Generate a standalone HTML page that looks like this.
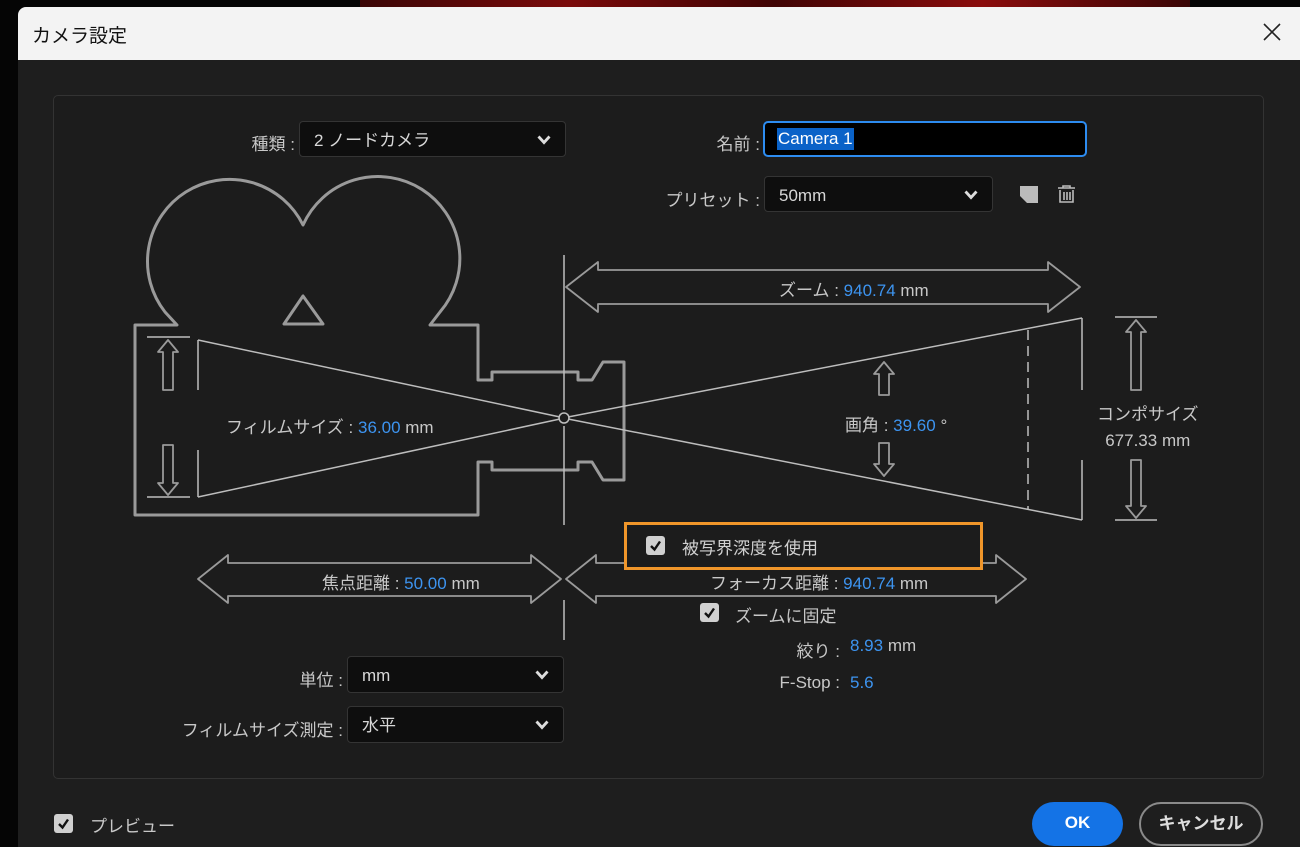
<!DOCTYPE html>
<html><head><meta charset="utf-8"><style>
*{margin:0;padding:0;box-sizing:border-box}
body{width:1300px;height:840px;background:#050505;position:relative;overflow:hidden;font-family:"Liberation Sans","Noto Sans CJK JP",sans-serif;color:#c8c8c8;font-size:17px}
.a{position:absolute;white-space:nowrap}
.b{color:#3d94f0}
.dd{position:absolute;background:#0e0e0e;border:1px solid #343434;border-radius:4px;color:#d8d8d8;padding-left:14px;line-height:37px}
.dd svg{position:absolute;right:14px;top:13px}
.cb{position:absolute;width:19px;height:19px;background:#d0d0d0;border-radius:3px}
.cb svg{position:absolute;left:3px;top:3px}
.r{text-align:right}
</style></head><body>
<div class="a" style="left:360px;top:0;width:830px;height:8px;background:linear-gradient(90deg,#3a0606,#7a0a0a,#400404,#8a0c0c,#3a0606)"></div>
<div class="a" style="left:18px;top:7px;width:1290px;height:840px;background:#1e1e1e;border-radius:8px 8px 0 0;overflow:hidden">
 <div style="height:53px;background:#f3f3f3;color:#111;font-size:19px;padding:14px 0 0 14px">カメラ設定</div>
</div>
<svg class="a" style="left:1262px;top:22px" width="20" height="20"><path d="M2 2L18 18M18 2L2 18" stroke="#222" stroke-width="1.6"/></svg>
<div class="a" style="left:53px;top:95px;width:1211px;height:684px;border:1px solid #333;border-radius:5px;background:#1c1c1c"></div>

<svg class="a" style="left:0;top:0" width="1300" height="840" fill="none" stroke="#9a9a9a">
 <g stroke-width="3" stroke-linejoin="round">
  <path d="M430,325 L440,312 A82 82 0 1 0 303,225 A82 82 0 1 0 165,312 L177,325 H135 V515 H478 V462 H492 V470 H578 V462 H592 L603,480 H624 V362 H603 L592,380 H578 V372 H492 V380 H478 V325 Z"/>
  <path d="M303,296 L284,324 H323 Z"/>
 </g>
 <g stroke="#bdbdbd" stroke-width="1.5">
  <path d="M198,340 L560,417 M198,497 L560,419 M568,417 L1082,318 M568,419 L1082,520"/>
  <path d="M198,340 V390 M198,450 V497 M1082,318 V390 M1082,460 V520"/>
  <path d="M1028,330 V510" stroke-dasharray="10 6"/>
  <path d="M564,255 V410 M564,426 V525 M564,600 V640"/>
  <circle cx="564" cy="418" r="5"/>
  <path d="M147,337 H190 M147,497 H190 M1115,317 H1157 M1115,520 H1157"/>
 </g>
 <g stroke="#9a9a9a" stroke-width="1.8" stroke-linejoin="round">
  <path d="M168,340 L178,352 H173 V390 H163 V352 H158 Z"/>
  <path d="M168,495 L178,483 H173 V445 H163 V483 H158 Z"/>
  <path d="M1136,320 L1146,332 H1141 V390 H1131 V332 H1126 Z"/>
  <path d="M1136,518 L1146,506 H1141 V460 H1131 V506 H1126 Z"/>
  <path d="M884,362 L894,374 H889 V395 H879 V374 H874 Z"/>
  <path d="M884,476 L894,464 H889 V443 H879 V464 H874 Z"/>
  <path d="M566,287 L598,262 V270 H1048 V262 L1080,287 L1048,312 V304 H598 V312 Z"/>
  <path d="M198,579 L228,555 V563 H531 V555 L561,579 L531,603 V596 H228 V603 Z"/>
  <path d="M566,579 L596,555 V563 H996 V555 L1026,579 L996,603 V596 H596 V603 Z"/>
 </g>
</svg>

<div class="a r" style="left:200px;top:130px;width:95px">種類 :</div>
<div class="dd" style="left:299px;top:121px;width:267px;height:36px">2 ノードカメラ<svg width="14" height="10"><path d="M1.5 1.5L7 7.5L12.5 1.5" stroke="#ddd" stroke-width="2.8" fill="none"/></svg></div>
<div class="a r" style="left:660px;top:130px;width:100px">名前 :</div>
<div class="a" style="left:763px;top:121px;width:324px;height:36px;background:#000;border:2px solid #2d8cf0;border-radius:5px"></div>
<div class="a" style="left:777px;top:128px;background:#0a62c8;color:#fff;padding:0 1px;line-height:22px">Camera 1</div>
<div class="a r" style="left:640px;top:186px;width:120px">プリセット :</div>
<div class="dd" style="left:764px;top:176px;width:229px;height:36px">50mm<svg width="14" height="10"><path d="M1.5 1.5L7 7.5L12.5 1.5" stroke="#ddd" stroke-width="2.8" fill="none"/></svg></div>
<svg class="a" style="left:1019px;top:184px" width="60" height="20"><path d="M1,2H19V19H8L1,12Z" fill="#bbb"/><g stroke="#bbb" stroke-width="1.6" fill="none"><path d="M39,4H56M44,4V2H51V4M41,6V18H54V6M45,8V16M48,8V16M51,8V16"/></g></svg>

<div class="a" style="left:779px;top:276px">ズーム : <span class="b">940.74</span> mm</div>
<div class="a" style="left:226px;top:413px">フィルムサイズ : <span class="b">36.00</span> mm</div>
<div class="a" style="left:845px;top:411px">画角 : <span class="b">39.60</span> °</div>
<div class="a" style="left:1097px;top:402px;text-align:center;line-height:26px">コンポサイズ<br>677.33 mm</div>
<div class="a" style="left:322px;top:569px">焦点距離 : <span class="b">50.00</span> mm</div>
<div class="a" style="left:710px;top:569px">フォーカス距離 : <span class="b">940.74</span> mm</div>

<div class="a" style="left:624px;top:522px;width:359px;height:48px;border:3px solid #f0962a;background:#1c1c1c"></div>
<div class="cb" style="left:646px;top:536px"><svg width="13" height="13"><path d="M2 7L5.5 10.5L11 2.5" stroke="#111" stroke-width="2.4" fill="none"/></svg></div>
<div class="a" style="left:682px;top:534px;color:#d0d0d0">被写界深度を使用</div>
<div class="cb" style="left:700px;top:603px"><svg width="13" height="13"><path d="M2 7L5.5 10.5L11 2.5" stroke="#111" stroke-width="2.4" fill="none"/></svg></div>
<div class="a" style="left:735px;top:602px">ズームに固定</div>
<div class="a r" style="left:740px;top:637px;width:100px">絞り :</div>
<div class="a" style="left:850px;top:636px"><span class="b">8.93</span> mm</div>
<div class="a r" style="left:740px;top:673px;width:100px">F-Stop :</div>
<div class="a b" style="left:850px;top:673px">5.6</div>

<div class="a r" style="left:240px;top:666px;width:103px">単位 :</div>
<div class="dd" style="left:347px;top:656px;width:217px;height:37px">mm<svg width="14" height="10"><path d="M1.5 1.5L7 7.5L12.5 1.5" stroke="#ddd" stroke-width="2.8" fill="none"/></svg></div>
<div class="a r" style="left:140px;top:716px;width:203px">フィルムサイズ測定 :</div>
<div class="dd" style="left:347px;top:706px;width:217px;height:37px">水平<svg width="14" height="10"><path d="M1.5 1.5L7 7.5L12.5 1.5" stroke="#ddd" stroke-width="2.8" fill="none"/></svg></div>

<div class="cb" style="left:54px;top:814px"><svg width="13" height="13"><path d="M2 7L5.5 10.5L11 2.5" stroke="#111" stroke-width="2.4" fill="none"/></svg></div>
<div class="a" style="left:90px;top:812px">プレビュー</div>
<div class="a" style="left:1032px;top:802px;width:91px;height:44px;border-radius:22px;background:#1473e6;color:#fff;font-weight:bold;text-align:center;line-height:42px">OK</div>
<div class="a" style="left:1139px;top:802px;width:124px;height:44px;border-radius:22px;border:2px solid #8a8a8a;color:#ddd;font-weight:bold;text-align:center;line-height:40px">キャンセル</div>
</body></html>
